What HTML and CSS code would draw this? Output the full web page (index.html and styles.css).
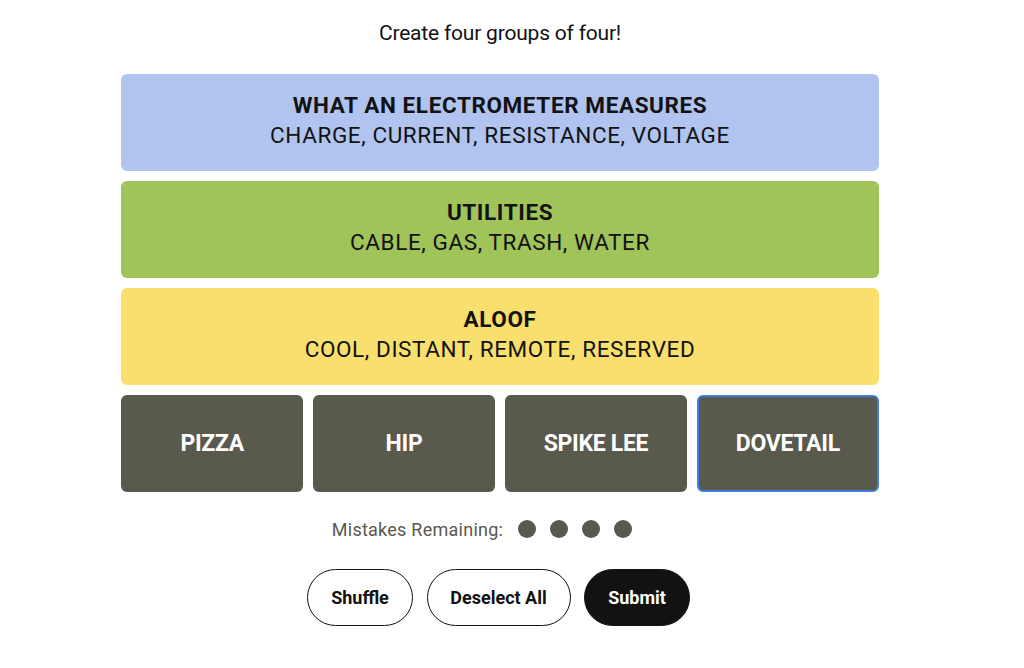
FILE: index.html
```html
<!DOCTYPE html>
<html>
<head>
<meta charset="utf-8">
<link rel="stylesheet" href="styles.css">
</head>
<body>
<div class="page">
  <p class="intro">Create four groups of four!</p>
  <div class="board">
    <div class="group blue">
      <div class="title">WHAT AN ELECTROMETER MEASURES</div>
      <div class="members">CHARGE, CURRENT, RESISTANCE, VOLTAGE</div>
    </div>
    <div class="group green">
      <div class="title">UTILITIES</div>
      <div class="members">CABLE, GAS, TRASH, WATER</div>
    </div>
    <div class="group yellow">
      <div class="title">ALOOF</div>
      <div class="members">COOL, DISTANT, REMOTE, RESERVED</div>
    </div>
    <div class="tiles">
      <div class="tile">PIZZA</div>
      <div class="tile">HIP</div>
      <div class="tile">SPIKE LEE</div>
      <div class="tile focused">DOVETAIL</div>
    </div>
  </div>
  <div class="mistakes">
    <span class="label">Mistakes Remaining:</span>
    <span class="dots"><span class="dot"></span><span class="dot"></span><span class="dot"></span><span class="dot"></span></span>
  </div>
  <div class="actions">
    <button class="btn shuffle">Shuffle</button>
    <button class="btn deselect">Deselect All</button>
    <button class="btn submit">Submit</button>
  </div>
</div>
</body>
</html>
```
FILE: styles.css
```css
html, body {
  margin: 0;
  padding: 0;
  background: #ffffff;
}
body {
  font-family: "Roboto", "Liberation Sans", sans-serif;
  color: #121212;
}
.page {
  width: 1000px;
  display: flex;
  flex-direction: column;
  align-items: center;
}
.intro {
  margin: 21px 0 0 0;
  font-size: 21px;
  line-height: 24px;
  height: 24px;
  letter-spacing: -0.2px;
}
.board {
  margin-top: 29px;
  width: 758px;
  display: flex;
  flex-direction: column;
  gap: 10.5px;
}
.group {
  height: 96.5px;
  border-radius: 6px;
  display: flex;
  flex-direction: column;
  align-items: center;
  justify-content: center;
  font-size: 22.5px;
  line-height: 30px;
  padding-bottom: 4px;
  box-sizing: border-box;
}
.group .title {
  font-weight: 700;
  letter-spacing: 0.6px;
}
.group .members {
  letter-spacing: 0.6px;
}
.blue { background: #b0c4ef; }
.green { background: #a0c35a; }
.yellow { background: #f9df6d; }
.tiles {
  display: grid;
  grid-template-columns: repeat(4, 1fr);
  gap: 9.5px;
}
.tile {
  height: 97px;
  background: #5a594e;
  color: #ffffff;
  border-radius: 6px;
  display: flex;
  align-items: center;
  justify-content: center;
  font-weight: 700;
  font-size: 23px;
  letter-spacing: -0.3px;
  box-sizing: border-box;
}
.tile.focused {
  border: 2px solid #3c7fdd;
}
.mistakes {
  margin-top: 25px;
  display: flex;
  align-items: center;
  padding-right: 36px;
  height: 24px;
}
.label {
  font-size: 18px;
  color: #5a594e;
  letter-spacing: 0.25px;
}
.dots {
  display: flex;
  gap: 14px;
  margin-left: 15px;
}
.dot {
  width: 18px;
  height: 18px;
  border-radius: 50%;
  background: #5a594e;
}
.actions {
  margin-top: 28px;
  display: flex;
  gap: 13.5px;
  padding-right: 3px;
}
.btn {
  font-family: "Roboto", "Liberation Sans", sans-serif;
  height: 57px;
  border-radius: 29px;
  border: 1px solid #121212;
  background: #ffffff;
  color: #121212;
  font-size: 18px;
  font-weight: 700;
  letter-spacing: 0px;
  padding: 0;
}
.shuffle { width: 106px; }
.deselect { width: 144px; }
.submit { width: 106px; background: #121212; color: #ffffff; }
```
